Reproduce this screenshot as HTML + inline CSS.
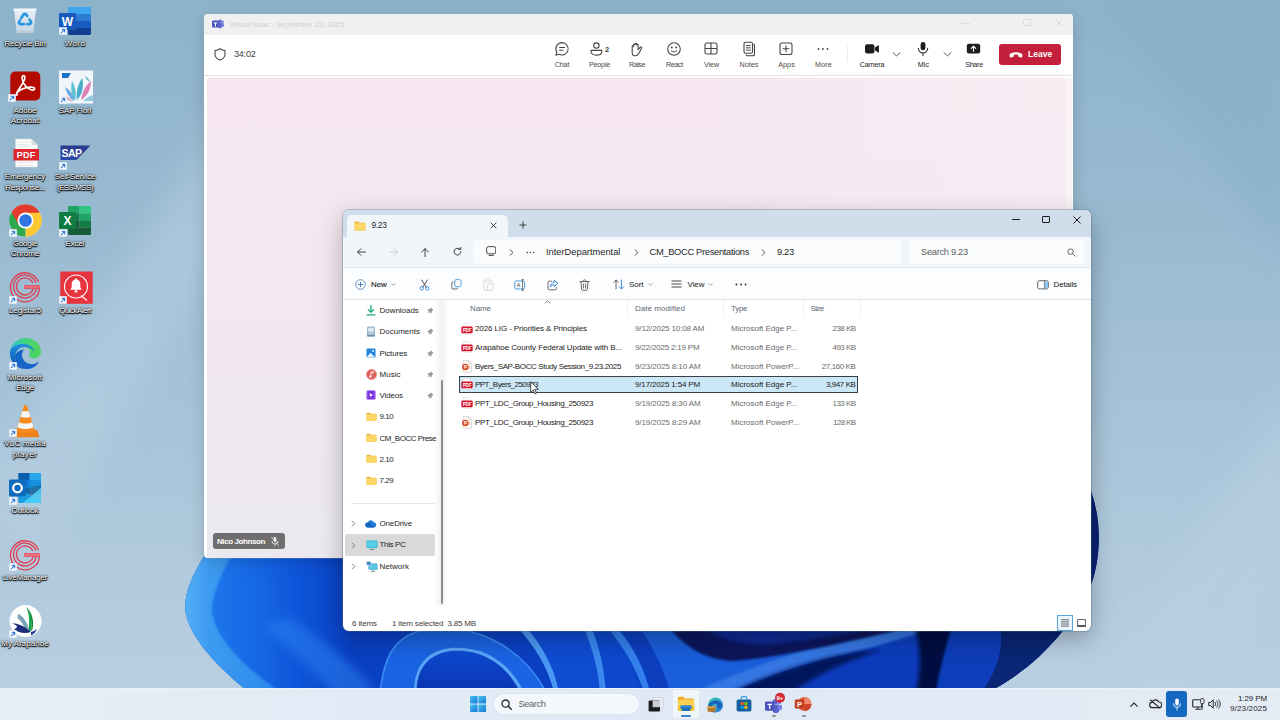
<!DOCTYPE html>
<html><head><meta charset="utf-8"><title>Desktop</title>
<style>
*{box-sizing:border-box;margin:0;padding:0}
html,body{width:1280px;height:720px;overflow:hidden}
body{font-family:"Liberation Sans",sans-serif;position:relative;background:#9dbcd3;color:#222}
.abs{position:absolute}
#wall{position:absolute;left:0;top:0;width:1280px;height:720px;background:linear-gradient(180deg,#8db3cb 0%,#98bad1 30%,#a8c4d9 60%,#b6cde0 90%,#bad0e2 100%)}
#wallsvg{position:absolute;left:0;top:0}
/* desktop icons */
.dlabel{position:absolute;width:70px;text-align:center;color:#fff;font-size:8px;line-height:10px;text-shadow:0 1px 1.5px #000,0 0 2px #000,0 0 1px #000;letter-spacing:-0.1px}
.ico{position:absolute}
.sc{position:absolute;width:7px;height:7px;background:#fff;border-radius:1px}
.sc:after{content:"";position:absolute;left:1.5px;top:1.5px;width:4px;height:4px;border-top:1.5px solid #2a7bd3;border-right:1.5px solid #2a7bd3}
.dl{position:absolute;width:80px;text-align:center;color:#fff;font-size:8px;line-height:10px;white-space:nowrap;text-shadow:0 .7px 1.100px #000,0 0 1.800px rgba(0,0,0,.9),.5px .9px 1px rgba(0,0,0,.9),0 0 3px rgba(0,0,0,.45)}
/* Teams */
#teams{position:absolute;left:204px;top:14px;width:869px;height:544px;background:#fff;border-radius:4px;overflow:hidden;box-shadow:0 0 0 .5px rgba(150,165,180,.5),0 4px 16px rgba(0,0,0,.16)}
#teams .tbar{position:absolute;left:0;top:0;width:100%;height:21px;background:#f0f0f0}
#teams .tool{position:absolute;left:0;top:21px;width:100%;height:41px;background:#fff;border-bottom:1px solid #e3e0e3}
#teams .stage{position:absolute;left:3px;top:64px;width:865px;height:480px;background:linear-gradient(90deg,rgba(255,255,255,0) 0%,rgba(255,255,255,0) 55%,rgba(255,255,255,.22) 100%),linear-gradient(180deg,#f6e7f0 0%,#f4e7f0 45%,#eee8ef 75%,#ebe9ef 100%)}
.tl{position:absolute;top:24.5px;font-size:7.2px;line-height:9px;color:#4a4a4a;transform:translateX(-50%);white-space:nowrap}
.tl.dk{color:#262626}
.tbtn{position:absolute;top:63px;font-size:8px;color:#424242;transform:translateX(-50%);white-space:nowrap;line-height:9px;top:59px}
/* Explorer */
#exp{position:absolute;left:343px;top:210px;width:748px;height:421px;background:#fff;border-radius:6px;overflow:hidden;box-shadow:0 0 0 1px rgba(90,110,130,.35),0 8px 24px rgba(0,0,0,.28)}
#exp .tabs{position:absolute;left:0;top:0;width:100%;height:27px;background:#cfdeea}
#exp .tab{position:absolute;left:4px;top:5px;width:161px;height:22px;background:#f1f6fa;border-radius:5px 5px 0 0}
#exp .addr{position:absolute;left:0;top:27px;width:100%;height:31px;background:#f1f6fa;border-bottom:1px solid #e3e7eb}
#exp .cmd{position:absolute;left:0;top:58px;width:100%;height:32px;background:#fcfdfe;border-bottom:1px solid #dcdfe3}
.t{position:absolute;white-space:nowrap;font-size:9px;line-height:11px;color:#1f1f1f}
.t.f{font-size:8px;line-height:11px}
.t.a{font-size:9.300px;line-height:12px;color:#1f1f1f}
/* taskbar */
#task{position:absolute;left:0;top:688px;width:1280px;height:32px;background:linear-gradient(90deg,#e6eef6,#dfe9f5 50%,#e4ecf5);box-shadow:inset 0 1px 0 #edf2f8}
</style></head><body>
<div id="wall"></div>
<svg id="wallsvg" width="1280" height="720" viewBox="0 0 1280 720">
<defs>
<linearGradient id="gL" gradientUnits="userSpaceOnUse" x1="212" y1="0" x2="350" y2="0"><stop offset="0" stop-color="#1d76ea"/><stop offset=".3" stop-color="#1668e6"/><stop offset=".65" stop-color="#0e54d8"/><stop offset="1" stop-color="#0a40c2"/></linearGradient>
<linearGradient id="gL2" gradientUnits="userSpaceOnUse" x1="183" y1="0" x2="290" y2="0"><stop offset="0" stop-color="#55aff4"/><stop offset=".25" stop-color="#3c9bf0"/><stop offset="1" stop-color="#2a86ec"/></linearGradient>
<linearGradient id="gM" gradientUnits="userSpaceOnUse" x1="343" y1="0" x2="1100" y2="0"><stop offset="0" stop-color="#0b42c6"/><stop offset=".2" stop-color="#0d4cd2"/><stop offset=".45" stop-color="#0b40c4"/><stop offset=".7" stop-color="#0a36b0"/><stop offset="1" stop-color="#08288c"/></linearGradient>
<linearGradient id="gArch" x1="0" y1="0" x2="0" y2="1"><stop offset="0" stop-color="#0d4ad0"/><stop offset="1" stop-color="#0a34b0"/></linearGradient>
<filter id="b1"><feGaussianBlur stdDeviation="1"/></filter>
<filter id="b2"><feGaussianBlur stdDeviation="2.2"/></filter>
<filter id="b3"><feGaussianBlur stdDeviation="5"/></filter>
<filter id="b8"><feGaussianBlur stdDeviation="16"/></filter>
<clipPath id="bloomclip"><path d="M214 540 C198 565 186 585 185 607 C186 632 212 662 246 690 L992 690 C1034 668 1068 632 1090 588 C1100 562 1103 525 1091 491 L1076 470 L1076 400 L214 400 Z"/></clipPath>
</defs>
<g filter="url(#b8)" opacity=".55">
<path d="M-40 520 L260 60 L340 60 L40 560 Z" fill="#b7cfe2"/>
<path d="M1080 720 L1300 380 L1300 560 L1200 720 Z" fill="#b9d0e3"/>
<path d="M1100 0 L1290 0 L1290 260 Z" fill="#86aec9"/>
</g>
<g clip-path="url(#bloomclip)">
<rect x="180" y="400" width="930" height="300" fill="url(#gM)"/>
<rect x="180" y="540" width="172" height="150" fill="url(#gL2)"/>
<path d="M240 540 C226 566 213 588 212 610 C214 636 240 664 282 694 L420 694 L420 540 Z" fill="url(#gL)"/>
<path d="M240 540 C226 566 213 588 212 610 C214 636 240 664 282 694" fill="none" stroke="#2a86ee" stroke-width="2.500" opacity=".6" filter="url(#b1)"/>
<path d="M262 626 C290 648 314 670 334 694 L378 694 C352 662 320 638 290 618 Z" fill="#2f84f2" opacity=".5" filter="url(#b3)"/>
<!-- arches under explorer -->
<path d="M400 628 L560 628 L560 692 L400 692 Z" fill="#0b3fc2"/>
<path d="M380 692 C384 660 392 640 416 632 C470 618 522 646 546 692 Z" fill="#1a63e2"/>
<path d="M380 692 C384 660 392 640 416 632 C470 618 522 646 546 692" fill="none" stroke="#3b8cf2" stroke-width="1.600"/>
<path d="M414 692 C414 667 426 651 450 648 C486 645 510 664 524 692 Z" fill="#5aa5f6"/>
<path d="M416.500 692 C416.500 669 428 654 451 651 C484 648.500 507 666 520 692 Z" fill="url(#gArch)"/>
<!-- ridges -->
<path d="M518 628 C536 648 548 668 554 692 L559 692 C554 664 541 644 527 628 Z" fill="#4a98f4"/>
<path d="M527 628 C542 646 554 666 559 692 L600 692 C596 664 590 644 584 628 Z" fill="#0e4cd2"/>
<path d="M584 628 C592 648 598 668 600 692 L606 692 C604 664 598 644 592 628 Z" fill="#3a88f0"/>
<path d="M592 628 C600 648 606 668 607 692 L640 692 C632 664 622 644 612 628 Z" fill="#0d48cc"/>
<path d="M608 628 C624 648 636 668 644 692 L650 692 C643 664 631 644 617 628 Z" fill="#3380ec"/>
<!-- right sweeping petals -->
<path d="M619 628 L1100 628 L1100 692 L652 692 C645 664 633 644 619 628 Z" fill="#0c3ebe"/>
<path d="M640 628 L905 628 C870 640 830 650 790 662 C750 674 715 686 700 692 L670 692 C664 670 654 648 640 628 Z" fill="#1a5eda"/>
<path d="M690 694 C720 680 760 664 800 652 C840 641 875 634 905 628 L935 628 C900 640 860 650 820 662 C780 674 745 688 730 694 Z" fill="#3476e2" filter="url(#b1)"/>
<path d="M668 626 C684 646 704 660 734 661 C790 656 850 641 899 630 L899 626 Z" fill="#07185c" filter="url(#b1)"/>
<path d="M700 626 C720 640 745 646 775 644 C810 640 850 633 880 626 Z" fill="#0b2c94" filter="url(#b2)"/>
<path d="M728 694 C760 680 790 668 822 660 C850 653 875 650 900 650 L925 654 L930 694 Z" fill="#0c3cbc"/>
<path d="M728 694 C752 682 782 670 815 661 C840 654 862 651 882 650 C850 660 820 672 790 694 Z" fill="#06195c" filter="url(#b2)"/>
<path d="M915 628 L953 628 C946 650 941 672 938 692 L916 692 C921 670 921 648 915 628 Z" fill="#040f40" filter="url(#b2)"/>
<path d="M952 628 L1000 628 C1004 650 996 672 982 692 L936 692 C940 670 946 648 952 628 Z" fill="#0c3cb8" filter="url(#b1)"/>
<path d="M1000 628 L1100 628 L1100 692 L982 692 C996 672 1004 650 1000 628 Z" fill="#0a2674"/>
<path d="M1060 400 L1110 400 L1110 640 L1040 640 Z" fill="#08206f"/>
</g>
</svg>

<div id="desk">
<svg class="abs" style="left:12px;top:6px" width="26" height="28" viewBox="0 0 26 28"><defs><linearGradient id="rb" x1="0" y1="0" x2="0" y2="1"><stop offset="0" stop-color="#eef4f9"/><stop offset="1" stop-color="#c9d9e6"/></linearGradient></defs><path d="M2 3.500h22l-2.600 22.300c-.1.800-.7 1.200-1.400 1.200H6c-.7 0-1.300-.4-1.400-1.200z" fill="url(#rb)" opacity=".93"/><path d="M1.500 2.500h23v2h-23z" fill="#f7fafc"/><path d="M4.200 24.500h17.600l-.3 1.600c-.1.600-.6.900-1.200.9H5.700c-.6 0-1.100-.3-1.200-.9z" fill="#b9c9d6" opacity=".8"/><g fill="none" stroke="#2496e0" stroke-width="2.700" stroke-linecap="round"><path d="M9.200 12.200l2.300-3.600c.7-1 2.100-1 2.800 0l.9 1.400"/><path d="M17.600 13.600l1.300 2.200c.6 1.100-.1 2.400-1.400 2.400h-2.300"/><path d="M11.800 18.200H8.600c-1.300 0-2-1.300-1.400-2.400l.6-1.100"/></g></svg>
<div class="dl" style="left:-15px;top:39.0px"><span style="letter-spacing:-0.091px">Recycle Bin</span></div>
<svg class="abs" style="left:59px;top:6px" width="33" height="30" viewBox="0 0 33 30"><rect x="9" y="1" width="23" height="7.500" rx="1.200" fill="#41a5ee"/><rect x="9" y="8" width="23" height="7" fill="#2b7cd3"/><rect x="9" y="15" width="23" height="7" fill="#185abd"/><path d="M9 22h23v5.500c0 .8-.6 1.400-1.400 1.400H10.400c-.8 0-1.400-.6-1.400-1.400z" fill="#103f91"/><rect x="0" y="7" width="17" height="17" rx="1.400" fill="#185abd"/><text x="8.500" y="20" text-anchor="middle" font-size="12" font-weight="700" fill="#fff" font-family="Liberation Sans, sans-serif">W</text></svg>
<svg class="abs" style="left:59px;top:27px" width="8" height="8" viewBox="0 0 8 8"><rect x=".2" y=".2" width="7.600" height="7.600" rx=".8" fill="#fbfdff" stroke="#c9d6e2" stroke-width=".4"/><path d="M2.200 5.800L5.600 2.400M3 2.300h2.700V5" fill="none" stroke="#2b7cd3" stroke-width="1.100" stroke-linecap="round" stroke-linejoin="round"/></svg>
<div class="dl" style="left:35px;top:39.0px"><span style="letter-spacing:0.408px">Word</span></div>
<svg class="abs" style="left:10px;top:71px" width="31" height="30" viewBox="0 0 31 30"><rect x=".3" y=".5" width="30" height="29" rx="5" fill="#b30b00"/><path d="M6.500 22.500c1.500-4 6-8.500 8-14 .7-2 .2-4-1-4s-1.800 2-1 4.500c1.200 4 4.500 8.200 8.500 9.700 2 .7 3.600.2 3.600-.9s-1.600-1.800-4.200-1.600c-4.500.4-10.200 2.500-12.700 4.800-1.300 1.300-1.700 2.500-1.200 3s1-.3 0-1.500z" fill="none" stroke="#fff" stroke-width="1.700" stroke-linejoin="round"/></svg>
<svg class="abs" style="left:8px;top:93.5px" width="8" height="8" viewBox="0 0 8 8"><rect x=".2" y=".2" width="7.600" height="7.600" rx=".8" fill="#fbfdff" stroke="#c9d6e2" stroke-width=".4"/><path d="M2.200 5.800L5.600 2.400M3 2.300h2.700V5" fill="none" stroke="#2b7cd3" stroke-width="1.100" stroke-linecap="round" stroke-linejoin="round"/></svg>
<div class="dl" style="left:-15px;top:105.7px"><span style="letter-spacing:-0.028px">Adobe</span></div>
<div class="dl" style="left:-15px;top:116.0px"><span style="letter-spacing:0.132px">Acrobat</span></div>
<svg class="abs" style="left:59px;top:70px" width="34" height="34" viewBox="0 0 34 34"><rect x="0" y=".5" width="34" height="33" fill="#f1f6fa"/><path d="M3 3h9L9 8H3z" fill="#1a74c8"/><path d="M18 30c-1-6 0-14 5-22 2 6 1 16-5 22z" fill="#2b9fc0" opacity=".85"/><path d="M22 30c1-7 4-14 10-19 0 7-3 15-10 19z" fill="#d55aa0" opacity=".75"/><path d="M16 31c-3-5-5-12-3-20 3 5 5 13 3 20z" fill="#3bb3c8" opacity=".8"/><path d="M15 31C11 28 7 23 6 17c5 3 9 8 9 14z" fill="#3f8fd8" opacity=".75"/><path d="M24 31c3-3 6-5 10-6v6z" fill="#6fb8d8" opacity=".7"/><path d="M14 32C10 31 6 29 3 26c5 0 9 2 11 6z" fill="#c87aa8" opacity=".6"/><path d="M26 6c2 1 4 3 5 6-2-1-4-3-5-6z" fill="#2b9fc0" opacity=".8"/></svg>
<svg class="abs" style="left:59px;top:96px" width="8" height="8" viewBox="0 0 8 8"><rect x=".2" y=".2" width="7.600" height="7.600" rx=".8" fill="#fbfdff" stroke="#c9d6e2" stroke-width=".4"/><path d="M2.200 5.800L5.600 2.400M3 2.300h2.700V5" fill="none" stroke="#2b7cd3" stroke-width="1.100" stroke-linecap="round" stroke-linejoin="round"/></svg>
<div class="dl" style="left:35px;top:105.7px"><span style="letter-spacing:-0.116px">SAP Fiori</span></div>
<svg class="abs" style="left:13px;top:138px" width="27" height="30" viewBox="0 0 27 30"><path d="M2.500 1h16l6 6v22h-22z" fill="#fbfbfb" stroke="#d8d8d8" stroke-width=".5"/><path d="M18.500 1v6h6z" fill="#dcdcdc"/><path d="M4.500 4h11M4.500 6.500h11M4.500 9h13M4.500 24.500h16M4.500 27h16" stroke="#e9e9e9" stroke-width="1.200"/><rect x=".5" y="11" width="25.500" height="11.500" fill="#e0262d"/><text x="13.200" y="20" text-anchor="middle" font-size="9" font-weight="700" fill="#fff" font-family="Liberation Sans, sans-serif" letter-spacing=".3">PDF</text></svg>
<div class="dl" style="left:-15px;top:172.4px"><span style="letter-spacing:-0.019px">Emergency</span></div>
<div class="dl" style="left:-15px;top:182.8px"><span style="letter-spacing:-0.300px">Response...</span></div>
<svg class="abs" style="left:60px;top:145px" width="31" height="16" viewBox="0 0 31 16"><defs><linearGradient id="sapg" x1="0" y1="0" x2="0" y2="1"><stop offset="0" stop-color="#2b3a8c"/><stop offset="1" stop-color="#2a4aa8"/></linearGradient></defs><path d="M.5.600h30L16.500 15H.5z" fill="url(#sapg)"/><text x="1.600" y="12" font-size="10.500" font-weight="700" fill="#fff" font-family="Liberation Sans, sans-serif" letter-spacing="-.6">SAP</text></svg>
<svg class="abs" style="left:59px;top:162px" width="8" height="8" viewBox="0 0 8 8"><rect x=".2" y=".2" width="7.600" height="7.600" rx=".8" fill="#fbfdff" stroke="#c9d6e2" stroke-width=".4"/><path d="M2.200 5.800L5.600 2.400M3 2.300h2.700V5" fill="none" stroke="#2b7cd3" stroke-width="1.100" stroke-linecap="round" stroke-linejoin="round"/></svg>
<div class="dl" style="left:35px;top:172.4px"><span style="letter-spacing:-0.227px">Self-Service</span></div>
<div class="dl" style="left:35px;top:182.8px"><span style="letter-spacing:-0.594px">(ESS-MSS)</span></div>
<svg class="abs" style="left:9px;top:204px" width="33" height="33" viewBox="0 0 33 33"><circle cx="16.500" cy="16.500" r="16" fill="#fff"/><path d="M16.500 16.500L2.640 8.500A16 16 0 0 1 30.360 8.500z" fill="#e33b2e"/><path d="M16.500 16.500L30.360 8.500A16 16 0 0 1 16.500 32.500z" fill="#fcc934"/><path d="M16.500 16.500L16.500 32.500A16 16 0 0 1 2.640 8.500z" fill="#2da94f"/><path d="M16.500 8.500h13.860A16 16 0 0 1 16.500 32.500l6.900-12z" fill="#fcc934"/><path d="M2.640 8.500l6.930 12 6.930 12A16 16 0 0 1 2.640 8.500z" fill="#2da94f"/><path d="M16.500 8.500H30.360A16 16 0 0 0 2.640 8.500l6.930 12z" fill="#e33b2e"/><circle cx="16.500" cy="16.500" r="8" fill="#fff"/><circle cx="16.500" cy="16.500" r="6.300" fill="#2f74e0"/></svg>
<svg class="abs" style="left:9px;top:229px" width="8" height="8" viewBox="0 0 8 8"><rect x=".2" y=".2" width="7.600" height="7.600" rx=".8" fill="#fbfdff" stroke="#c9d6e2" stroke-width=".4"/><path d="M2.200 5.800L5.600 2.400M3 2.300h2.700V5" fill="none" stroke="#2b7cd3" stroke-width="1.100" stroke-linecap="round" stroke-linejoin="round"/></svg>
<div class="dl" style="left:-15px;top:239.1px"><span style="letter-spacing:-0.299px">Google</span></div>
<div class="dl" style="left:-15px;top:249.4px"><span style="letter-spacing:0.041px">Chrome</span></div>
<svg class="abs" style="left:59px;top:205px" width="33" height="31" viewBox="0 0 33 31"><rect x="9" y="1" width="11.500" height="7.500" fill="#21a366"/><path d="M20.500 1h10c.8 0 1.500.7 1.500 1.500v6H20.500z" fill="#33c481"/><rect x="9" y="8.500" width="11.500" height="7" fill="#107c41"/><rect x="20.500" y="8.500" width="11.500" height="7" fill="#21a366"/><rect x="9" y="15.500" width="11.500" height="7" fill="#185c37"/><rect x="20.500" y="15.500" width="11.500" height="7" fill="#107c41"/><path d="M9 22.500h23v6c0 .8-.7 1.500-1.500 1.500h-20c-.8 0-1.500-.7-1.500-1.500z" fill="#185c37"/><rect x="0" y="7" width="17" height="17" rx="1.400" fill="#107c41"/><text x="8.500" y="20" text-anchor="middle" font-size="12" font-weight="700" fill="#fff" font-family="Liberation Sans, sans-serif">X</text></svg>
<svg class="abs" style="left:59px;top:229px" width="8" height="8" viewBox="0 0 8 8"><rect x=".2" y=".2" width="7.600" height="7.600" rx=".8" fill="#fbfdff" stroke="#c9d6e2" stroke-width=".4"/><path d="M2.200 5.800L5.600 2.400M3 2.300h2.700V5" fill="none" stroke="#2b7cd3" stroke-width="1.100" stroke-linecap="round" stroke-linejoin="round"/></svg>
<div class="dl" style="left:35px;top:239.1px"><span style="letter-spacing:-0.152px">Excel</span></div>
<svg class="abs" style="left:9px;top:271px" width="32" height="32" viewBox="0 0 32 32"><g fill="none" stroke="#e23b4e" stroke-width="1.300"><path d="M29.500 11A14.500 14.500 0 1 0 30.500 16"/><path d="M26.800 11.500A11.500 11.500 0 1 0 27.500 16"/><path d="M23.800 12A8.500 8.500 0 1 0 24.500 16"/></g><path d="M15 14.200h16v3.600H15z" fill="#e23b4e"/><path d="M15 15.300h16M15 16.700h16" stroke="#f6b5bd" stroke-width=".5"/></svg>
<svg class="abs" style="left:9px;top:296px" width="8" height="8" viewBox="0 0 8 8"><rect x=".2" y=".2" width="7.600" height="7.600" rx=".8" fill="#fbfdff" stroke="#c9d6e2" stroke-width=".4"/><path d="M2.200 5.800L5.600 2.400M3 2.300h2.700V5" fill="none" stroke="#2b7cd3" stroke-width="1.100" stroke-linecap="round" stroke-linejoin="round"/></svg>
<div class="dl" style="left:-15px;top:305.8px"><span style="letter-spacing:-0.102px">Legistar5</span></div>
<svg class="abs" style="left:59.500px;top:271px" width="33" height="33" viewBox="0 0 33 33"><rect x=".3" y=".5" width="32.400" height="32.300" fill="#e8343f"/><circle cx="16" cy="15.500" r="11.500" fill="none" stroke="#fff" stroke-width="1.100"/><path d="M21 24.500l6 5" stroke="#fff" stroke-width="1.100"/><path d="M16 8.500c-3 0-4.300 2.300-4.300 5v3l-1.500 2.300h11.600l-1.500-2.300v-3c0-2.700-1.300-5-4.300-5z" fill="#fff"/><circle cx="16" cy="20.300" r="1.400" fill="#fff"/><circle cx="16" cy="8.200" r="1" fill="#fff"/></svg>
<svg class="abs" style="left:59px;top:296px" width="8" height="8" viewBox="0 0 8 8"><rect x=".2" y=".2" width="7.600" height="7.600" rx=".8" fill="#fbfdff" stroke="#c9d6e2" stroke-width=".4"/><path d="M2.200 5.800L5.600 2.400M3 2.300h2.700V5" fill="none" stroke="#2b7cd3" stroke-width="1.100" stroke-linecap="round" stroke-linejoin="round"/></svg>
<div class="dl" style="left:35px;top:305.8px"><span style="letter-spacing:-0.541px">QuickAlert</span></div>
<svg class="abs" style="left:9px;top:337px" width="33" height="33" viewBox="0 0 33 33"><defs><linearGradient id="ed1" x1="0" y1="0" x2="1" y2="0"><stop offset="0" stop-color="#2fc6d0"/><stop offset=".5" stop-color="#41d07c"/><stop offset="1" stop-color="#55d65a"/></linearGradient><linearGradient id="ed2" x1="0" y1="0" x2="0" y2="1"><stop offset="0" stop-color="#1f8fe0"/><stop offset="1" stop-color="#0c4da8"/></linearGradient></defs><path d="M1 16.500C1 8 8 1 16.500 1 26 1 32 8 32 14.500c0 4-3 7-7 7-3.500 0-5-1.500-5-3 0-1 1-1.500 1-3.200C21 12.500 18.500 10 15 10 9.500 10 6 15 6 20c0 .5 0 1 .1 1.500C3 21 1 19.500 1 16.500z" fill="url(#ed1)"/><path d="M1 16.500c0-1 .1-2 .3-3C3 9.500 8 7 14 7c6 0 11 3.500 11 8 0 0-2-5-9.500-5C9.500 10 6 15 6 20c0 6 4.500 11 10.500 12C8 32 1 25 1 16.500z" fill="url(#ed2)"/><path d="M6 20c0 6 4.500 11 10.500 12 6 .5 11-2.500 13.500-7.500-2.500 2-6 3-9 2.500-5-1-8-5-8-9 0-2 .8-4 2-5.500C10 13 6 16 6 20z" fill="#1565c8"/></svg>
<svg class="abs" style="left:9px;top:362px" width="8" height="8" viewBox="0 0 8 8"><rect x=".2" y=".2" width="7.600" height="7.600" rx=".8" fill="#fbfdff" stroke="#c9d6e2" stroke-width=".4"/><path d="M2.200 5.800L5.600 2.400M3 2.300h2.700V5" fill="none" stroke="#2b7cd3" stroke-width="1.100" stroke-linecap="round" stroke-linejoin="round"/></svg>
<div class="dl" style="left:-15px;top:372.5px"><span style="letter-spacing:0.250px">Microsoft</span></div>
<div class="dl" style="left:-15px;top:382.9px"><span style="letter-spacing:-0.297px">Edge</span></div>
<svg class="abs" style="left:11px;top:404px" width="29" height="34" viewBox="0 0 29 34"><path d="M3 26h23l2 5.500c.3.900-.3 1.800-1.300 1.800H2.300c-1 0-1.600-.9-1.300-1.800z" fill="#f08019"/><path d="M14.500 1c.9 0 1.500.5 1.800 1.400L23.500 26c-2 2.200-5.300 3.200-9 3.200S7.500 28.200 5.500 26L12.700 2.400C13 1.500 13.600 1 14.500 1z" fill="#f58a1f"/><path d="M11.300 7.200h6.400l1.700 5.600c-1.400.6-3.100.9-4.900.9s-3.500-.3-4.900-.9z" fill="#f6f6f6"/><path d="M7.900 18.200c1.900.9 4.200 1.300 6.600 1.300s4.700-.4 6.600-1.300l1.500 5.100c-2.200 1.200-5 1.800-8.100 1.800s-5.900-.6-8.100-1.800z" fill="#f6f6f6"/></svg>
<svg class="abs" style="left:9px;top:429px" width="8" height="8" viewBox="0 0 8 8"><rect x=".2" y=".2" width="7.600" height="7.600" rx=".8" fill="#fbfdff" stroke="#c9d6e2" stroke-width=".4"/><path d="M2.200 5.800L5.600 2.400M3 2.300h2.700V5" fill="none" stroke="#2b7cd3" stroke-width="1.100" stroke-linecap="round" stroke-linejoin="round"/></svg>
<div class="dl" style="left:-15px;top:439.2px"><span style="letter-spacing:0.225px">VLC media</span></div>
<div class="dl" style="left:-15px;top:449.6px"><span style="letter-spacing:0.367px">player</span></div>
<svg class="abs" style="left:9px;top:472px" width="33" height="33" viewBox="0 0 33 33"><rect x="9.500" y="1" width="22.500" height="21" rx="1.500" fill="#1490df"/><rect x="9.500" y="1" width="11" height="7" fill="#0a5eb0"/><rect x="20.500" y="1" width="11.500" height="7" rx="1" fill="#28a8ea"/><rect x="9.500" y="8" width="11" height="7" fill="#0f78d4"/><rect x="20.500" y="8" width="11.500" height="7" fill="#1490df"/><rect x="20.500" y="15" width="11.500" height="7" fill="#35b8f1"/><path d="M9.500 17l22.500-3.500v16c0 .8-.7 1.500-1.500 1.500H11c-.8 0-1.500-.7-1.500-1.500z" fill="#123b6d" opacity=".55"/><path d="M9.500 16l22.500 13.500c-.2.900-.8 1.500-1.700 1.500H11c-.8 0-1.500-.7-1.500-1.500z" fill="#1b9de2"/><path d="M32 16L14 31h16.500c.8 0 1.500-.7 1.500-1.500z" fill="#50d9ff" opacity=".8"/><rect x="0" y="7.500" width="17" height="17" rx="1.400" fill="#0f6cbd"/><circle cx="8.500" cy="16" r="4.300" fill="none" stroke="#fff" stroke-width="2.200"/></svg>
<svg class="abs" style="left:9px;top:497px" width="8" height="8" viewBox="0 0 8 8"><rect x=".2" y=".2" width="7.600" height="7.600" rx=".8" fill="#fbfdff" stroke="#c9d6e2" stroke-width=".4"/><path d="M2.200 5.800L5.600 2.400M3 2.300h2.700V5" fill="none" stroke="#2b7cd3" stroke-width="1.100" stroke-linecap="round" stroke-linejoin="round"/></svg>
<div class="dl" style="left:-15px;top:505.9px"><span style="letter-spacing:-0.083px">Outlook</span></div>
<svg class="abs" style="left:9px;top:539px" width="32" height="32" viewBox="0 0 32 32"><g fill="none" stroke="#e23b4e" stroke-width="1.300"><path d="M29.500 11A14.500 14.500 0 1 0 30.500 16"/><path d="M26.800 11.500A11.500 11.500 0 1 0 27.500 16"/><path d="M23.800 12A8.500 8.500 0 1 0 24.500 16"/></g><path d="M15 14.200h16v3.600H15z" fill="#e23b4e"/><path d="M15 15.300h16M15 16.700h16" stroke="#f6b5bd" stroke-width=".5"/></svg>
<svg class="abs" style="left:9px;top:563px" width="8" height="8" viewBox="0 0 8 8"><rect x=".2" y=".2" width="7.600" height="7.600" rx=".8" fill="#fbfdff" stroke="#c9d6e2" stroke-width=".4"/><path d="M2.200 5.800L5.600 2.400M3 2.300h2.700V5" fill="none" stroke="#2b7cd3" stroke-width="1.100" stroke-linecap="round" stroke-linejoin="round"/></svg>
<div class="dl" style="left:-15px;top:572.6px"><span style="letter-spacing:-0.141px">LiveManager</span></div>
<svg class="abs" style="left:9px;top:604px" width="33" height="34" viewBox="0 0 33 34"><circle cx="16.500" cy="17" r="16" fill="#fdfefe"/><path d="M17.500 3c4 6 6 14 4.500 24l-2.500-.5C21 17.500 20 10 17.500 3z" fill="#11a24b"/><path d="M17.500 3c5 5 8 13 6 22l-1.500 2C23.500 18 21.500 9 17.500 3z" fill="#0c8a3c"/><path d="M9.500 10c5 3 9 9 11 17.500l-4-1C15 20 13 14.500 9.500 10z" fill="#8fb4c4"/><path d="M9.500 10c-1 1.500-1 3-.5 4.500 3.500 3 6 7 7.500 12l4 1C18.500 19 14.500 13 9.500 10z" fill="#7aa3b6"/><path d="M3 19.500c5-.5 12 2 19 8.500-6 2-12 1-17-2.500 2-1 3-2 3-3.500-1.500-1.200-3-2-5-2.500z" fill="#1c2f7a"/><path d="M22 28c2-.5 4-1.500 6-3-1 3-3 5-6 6.200z" fill="#233a8e"/></svg>
<svg class="abs" style="left:9px;top:630px" width="8" height="8" viewBox="0 0 8 8"><rect x=".2" y=".2" width="7.600" height="7.600" rx=".8" fill="#fbfdff" stroke="#c9d6e2" stroke-width=".4"/><path d="M2.200 5.800L5.600 2.400M3 2.300h2.700V5" fill="none" stroke="#2b7cd3" stroke-width="1.100" stroke-linecap="round" stroke-linejoin="round"/></svg>
<div class="dl" style="left:-15px;top:639.3px"><span style="letter-spacing:0.033px">My Arapahoe</span></div>
</div>

<div id="teams">
  <div class="tbar">
    <svg class="abs" style="left:8px;top:5px" width="12" height="10" viewBox="0 0 12 10"><rect x="0" y="1.6" width="7" height="7" rx="1" fill="#4b53bc"/><circle cx="8.2" cy="2.2" r="1.7" fill="#5b63c9"/><circle cx="10.8" cy="2.8" r="1.1" fill="#6a72d6"/><path d="M6 4h4.2v3.4a2.2 2.2 0 0 1-4.2.6z" fill="#5b63c9"/><path d="M9.6 4.3H12v2.5a1.4 1.4 0 0 1-2.4.8z" fill="#7b83eb"/><path d="M1.8 3.6h3.4v.9H4v3H3v-3H1.8z" fill="#fff"/></svg>
    <div class="t" style="left:25px;top:5px;font-size:8px;color:#d0d0d0;letter-spacing:-0.250px">Virtual Isaac - September 23, 2025</div>
    <div class="abs" style="left:757px;top:9px;width:9px;height:1px;background:#dcdcdc"></div>
    <div class="abs" style="left:819px;top:5px;width:8px;height:7px;border:1px solid #dcdcdc;border-radius:1px"></div>
    <svg class="abs" style="left:851px;top:5px" width="8" height="8" viewBox="0 0 8 8"><path d="M.5.5l7 7M7.500 .5l-7 7" stroke="#dadada" stroke-width="1" fill="none"/></svg>
  </div>
  <div class="tool">
    <svg class="abs" style="left:10px;top:13px" width="12" height="13" viewBox="0 0 12 13"><path d="M6 .8c1.600 1.200 3.300 1.700 5 1.800v3.600c0 2.800-2 4.800-5 5.900-3-1.100-5-3.100-5-5.900V2.600C2.700 2.500 4.400 2 6 .8z" fill="none" stroke="#4a4a4a" stroke-width="1.100"/></svg>
    <div class="t" style="left:30px;top:14px;font-size:9px;color:#3d3d3d;letter-spacing:-0.206px">34:02</div>
    <!-- Chat -->
    <svg class="abs" style="left:350px;top:6px" width="16" height="16" viewBox="0 0 16 16"><path d="M8 1.600a6.200 6.200 0 1 1-2.900 11.700L1.800 14.300l1-3.200A6.200 6.200 0 0 1 8 1.600z" fill="none" stroke="#454545" stroke-width="1.100" stroke-linejoin="round"/><path d="M5.600 6.500h5M5.600 9.200h3.400" stroke="#454545" stroke-width="1" stroke-linecap="round"/></svg>
    <div class="tl" style="left:358px;letter-spacing:-0.109px">Chat</div>
    <!-- People -->
    <svg class="abs" style="left:385px;top:6px" width="22" height="16" viewBox="0 0 22 16"><circle cx="7.400" cy="4.600" r="2.700" fill="none" stroke="#454545" stroke-width="1.100"/><path d="M2 9.400h10.800v1c0 2.300-2.300 3.700-5.400 3.700S2 12.700 2 10.400z" fill="none" stroke="#454545" stroke-width="1.100" stroke-linejoin="round"/><text x="16" y="10.800" font-size="7.500" font-weight="700" fill="#3a3a3a" font-family="Liberation Sans, sans-serif">2</text></svg>
    <div class="tl" style="left:395.500px;letter-spacing:-0.190px">People</div>
    <!-- Raise -->
    <svg class="abs" style="left:425px;top:6px" width="16" height="16" viewBox="0 0 16 16"><path d="M3.200 9.500V5.600c0-1 1.400-1 1.400 0V3.800c0-1 1.500-1 1.500 0V3.100c0-1 1.500-1 1.500 0v.9c0-1 1.500-1 1.500 0v4.600l2.200-2.400c.8-.8 1.900.1 1.300 1.100l-2.700 5c-.9 1.600-2 2.500-3.700 2.500-1.900 0-3-1.500-3-3.400z" fill="none" stroke="#454545" stroke-width="1.100" stroke-linejoin="round"/></svg>
    <div class="tl" style="left:433px;letter-spacing:-0.478px">Raise</div>
    <!-- React -->
    <svg class="abs" style="left:462px;top:6px" width="16" height="16" viewBox="0 0 16 16"><circle cx="8" cy="8" r="6.300" fill="none" stroke="#454545" stroke-width="1.100"/><circle cx="5.800" cy="6.500" r=".9" fill="#454545"/><circle cx="10.200" cy="6.500" r=".9" fill="#454545"/><path d="M5.200 9.700c1.500 1.700 4.100 1.700 5.600 0" fill="none" stroke="#454545" stroke-width="1" stroke-linecap="round"/></svg>
    <div class="tl" style="left:470.500px;letter-spacing:-0.356px">React</div>
    <!-- View -->
    <svg class="abs" style="left:500px;top:7px" width="14" height="14" viewBox="0 0 14 14"><rect x="1" y="1" width="12" height="11" rx="1.800" fill="none" stroke="#454545" stroke-width="1.100"/><path d="M7 1v11M1 6.500h12" stroke="#454545" stroke-width="1.100"/></svg>
    <div class="tl" style="left:507.500px;letter-spacing:-0.113px">View</div>
    <!-- Notes -->
    <svg class="abs" style="left:538px;top:6px" width="15" height="16" viewBox="0 0 15 16"><rect x="2" y="1.300" width="8.500" height="11" rx="1.600" fill="none" stroke="#454545" stroke-width="1.100"/><path d="M4 13.800c.3.600.8.900 1.500.9h5c1.300 0 2-.8 2-2V4.500c0-.7-.3-1.200-.9-1.500" fill="none" stroke="#454545" stroke-width="1.100"/><path d="M4.300 4.500h4M4.300 6.800h4M4.300 9.100h4" stroke="#454545" stroke-width="1" stroke-linecap="round"/></svg>
    <div class="tl" style="left:545px;letter-spacing:0.044px">Notes</div>
    <!-- Apps -->
    <svg class="abs" style="left:575px;top:7px" width="14" height="14" viewBox="0 0 14 14"><rect x="1" y="1" width="12" height="11.500" rx="2" fill="none" stroke="#454545" stroke-width="1.100"/><path d="M7 3.800v6M4 6.800h6" stroke="#454545" stroke-width="1.100" stroke-linecap="round"/></svg>
    <div class="tl" style="left:582.500px;letter-spacing:0.090px">Apps</div>
    <!-- More -->
    <svg class="abs" style="left:613px;top:12px" width="12" height="4" viewBox="0 0 12 4"><circle cx="1.500" cy="2" r=".9" fill="#454545"/><circle cx="6" cy="2" r=".9" fill="#454545"/><circle cx="10.500" cy="2" r=".9" fill="#454545"/></svg>
    <div class="tl" style="left:619.500px;letter-spacing:0.152px">More</div>
    <div class="abs" style="left:643px;top:11px;width:1px;height:16px;background:#ececec"></div>
    <!-- Camera -->
    <svg class="abs" style="left:660px;top:8px" width="16" height="12" viewBox="0 0 16 12"><rect x="1" y="1.200" width="9.500" height="9.300" rx="2.200" fill="#1f1f1f"/><path d="M11 4.600l3-2.200c.4-.3.900 0 .9.500v6c0 .5-.5.800-.9.500l-3-2.200z" fill="#1f1f1f"/></svg>
    <div class="tl dk" style="left:668px;letter-spacing:-0.196px">Camera</div>
    <svg class="abs" style="left:688px;top:17px" width="9" height="5" viewBox="0 0 9 5"><path d="M1 .8l3.500 3L8 .8" fill="none" stroke="#5a5a5a" stroke-width="1" stroke-linecap="round"/></svg>
    <!-- Mic -->
    <svg class="abs" style="left:712px;top:6px" width="14" height="16" viewBox="0 0 14 16"><rect x="4.600" y="1" width="4.800" height="8.300" rx="2.400" fill="#1f1f1f"/><path d="M2.300 7.200a4.700 4.700 0 0 0 9.400 0M7 12v2.600" fill="none" stroke="#333" stroke-width="1.100" stroke-linecap="round"/></svg>
    <div class="tl dk" style="left:719.500px;letter-spacing:0.104px">Mic</div>
    <svg class="abs" style="left:739px;top:17px" width="9" height="5" viewBox="0 0 9 5"><path d="M1 .8l3.500 3L8 .8" fill="none" stroke="#5a5a5a" stroke-width="1" stroke-linecap="round"/></svg>
    <!-- Share -->
    <svg class="abs" style="left:762px;top:8px" width="15" height="12" viewBox="0 0 15 12"><rect x=".8" y=".8" width="13.400" height="9.800" rx="2" fill="#1f1f1f"/><path d="M7.500 8.300V3.400M5.300 5.300l2.200-2.100 2.200 2.100" fill="none" stroke="#fff" stroke-width="1.100" stroke-linecap="round" stroke-linejoin="round"/></svg>
    <div class="tl dk" style="left:770px;letter-spacing:-0.287px">Share</div>
    <!-- Leave -->
    <div class="abs" style="left:795px;top:9px;width:62px;height:21px;background:#c4203c;border-radius:3px"></div>
    <svg class="abs" style="left:805px;top:16px" width="14" height="8" viewBox="0 0 14 8"><path d="M7 1.200c2.600 0 4.700.7 6 1.900.6.600.6 1.500.2 2.300l-.3.500c-.3.500-.8.700-1.400.5l-1.600-.6c-.5-.2-.8-.6-.8-1.100V3.900c-1.300-.4-2.900-.4-4.200 0v.8c0 .5-.3.900-.8 1.100l-1.600.6c-.6.200-1.100 0-1.400-.5l-.3-.5C.4 4.600.4 3.700 1 3.100 2.300 1.900 4.400 1.200 7 1.200z" fill="#fff"/></svg>
    <div class="t" style="left:824px;top:14px;font-size:8.500px;font-weight:700;color:#fff;letter-spacing:0.018px">Leave</div>
  </div>
  <div class="stage">
    <div class="abs" style="right:0;top:0;width:6px;height:100%;background:rgba(255,255,255,.3)"></div>
    <div class="abs" style="left:6px;top:455px;width:72px;height:16px;background:#716e70;border-radius:3px"></div>
    <div class="t" style="left:10px;top:457.500px;font-size:8px;font-weight:700;color:#fff;letter-spacing:-0.416px">Nico Johnson</div>
    <svg class="abs" style="left:63px;top:458px" width="10" height="11" viewBox="0 0 10 11"><rect x="3.600" y="1" width="2.800" height="5" rx="1.400" fill="#e8e8e8"/><path d="M2 5a3 3 0 0 0 6 0M5 8v1.600" fill="none" stroke="#e8e8e8" stroke-width=".9"/><path d="M1.500 1l7 8.500" stroke="#e8e8e8" stroke-width=".9"/></svg>
  </div>
</div>

<div id="exp">
  <div class="tabs"><div class="tab"></div>
    <svg class="abs" style="left:11px;top:10.5px" width="12" height="10" viewBox="0 0 12 10"><path d="M.5 1.600C.5 1 1 .5 1.600.5h2.700l1.300 1.300H10.400c.6 0 1.100.5 1.100 1.100V8.400c0 .6-.5 1.100-1.100 1.100H1.600C1 9.500.5 9 .5 8.400z" fill="#e8b53a"/><path d="M.5 3.400C.5 2.800 1 2.300 1.600 2.300h8.800c.6 0 1.100.5 1.100 1.100v5c0 .6-.5 1.100-1.100 1.100H1.600C1 9.500.5 9 .5 8.400z" fill="#fcd667"/></svg>
    <div class="t" style="left:28.500px;top:10px;font-size:8.300px;letter-spacing:-0.289px">9.23</div>
    <svg class="abs" style="left:147px;top:12px" width="7" height="7" viewBox="0 0 7 7"><path d="M.6.600l5.800 5.800M6.400.6L.6 6.400" stroke="#333" stroke-width=".9"/></svg>
    <svg class="abs" style="left:176px;top:11px" width="8" height="8" viewBox="0 0 8 8"><path d="M4 .5v7M.5 4h7" stroke="#333" stroke-width=".9"/></svg>
    <div class="abs" style="left:669px;top:9px;width:8px;height:1px;background:#1a1a1a"></div>
    <div class="abs" style="left:699px;top:5.500px;width:7.500px;height:7.500px;border:1px solid #1a1a1a;border-radius:1px"></div>
    <svg class="abs" style="left:730px;top:5.500px" width="8" height="8" viewBox="0 0 8 8"><path d="M.5.500l7 7M7.500.5l-7 7" stroke="#1a1a1a" stroke-width="1"/></svg>
  </div>
  <div class="addr">
    <svg class="abs" style="left:13.500px;top:10.500px" width="9" height="8.100" viewBox="0 0 10 9"><path d="M9.500 4.500H.8M4.300.8L.7 4.500l3.600 3.700" fill="none" stroke="#2b2b2b" stroke-width="1" stroke-linecap="round" stroke-linejoin="round"/></svg>
    <svg class="abs" style="left:45.500px;top:10.500px" width="9" height="8.100" viewBox="0 0 10 9"><path d="M.5 4.500h8.700M5.700.8l3.600 3.700-3.600 3.700" fill="none" stroke="#c2c6ca" stroke-width="1" stroke-linecap="round" stroke-linejoin="round"/></svg>
    <svg class="abs" style="left:77.800px;top:10.500px" width="8.100" height="9" viewBox="0 0 9 10"><path d="M4.500 9.500V.8M.8 4.400L4.500.8l3.700 3.600" fill="none" stroke="#2b2b2b" stroke-width="1" stroke-linecap="round" stroke-linejoin="round"/></svg>
    <svg class="abs" style="left:109.500px;top:10.300px" width="9.200" height="9.200" viewBox="0 0 10 10"><path d="M8.600 5a3.700 3.700 0 1 1-1.400-2.900" fill="none" stroke="#2b2b2b" stroke-width="1" stroke-linecap="round"/><path d="M5.800 2.300h2.400V0" fill="none" stroke="#2b2b2b" stroke-width="1" stroke-linecap="round" stroke-linejoin="round" transform="translate(.3 .3)"/></svg>
    <div class="abs" style="left:131px;top:3px;width:427px;height:24px;background:#fbfcfd;border-radius:3px"></div>
    <div class="abs" style="left:566px;top:3px;width:175px;height:24px;background:#fbfcfd;border-radius:3px"></div>
    <svg class="abs" style="left:142.800px;top:9px" width="10.400" height="10.400" viewBox="0 0 11 11"><rect x=".7" y=".7" width="9.600" height="7.600" rx="1.800" fill="none" stroke="#3a3a3a" stroke-width="1"/><path d="M3.300 10h4.400" stroke="#3a3a3a" stroke-width="1" stroke-linecap="round"/></svg>
    <svg class="abs" style="left:165.500px;top:11.500px" width="5" height="7" viewBox="0 0 5 7"><path d="M1 .7l3 2.800-3 2.800" fill="none" stroke="#444" stroke-width=".9" stroke-linecap="round"/></svg>
    <svg class="abs" style="left:183px;top:14px" width="9" height="3" viewBox="0 0 9 3"><circle cx="1.200" cy="1.500" r=".75" fill="#333"/><circle cx="4.500" cy="1.500" r=".75" fill="#333"/><circle cx="7.800" cy="1.500" r=".75" fill="#333"/></svg>
    <div class="t a" style="left:203px;top:9px;letter-spacing:-0.001px">InterDepartmental</div>
    <svg class="abs" style="left:291px;top:11.500px" width="5" height="7" viewBox="0 0 5 7"><path d="M1 .7l3 2.800-3 2.800" fill="none" stroke="#444" stroke-width=".9" stroke-linecap="round"/></svg>
    <div class="t a" style="left:306.500px;top:9px;letter-spacing:-0.306px">CM_BOCC Presentations</div>
    <svg class="abs" style="left:417.500px;top:11.500px" width="5" height="7" viewBox="0 0 5 7"><path d="M1 .7l3 2.800-3 2.800" fill="none" stroke="#444" stroke-width=".9" stroke-linecap="round"/></svg>
    <div class="t a" style="left:434px;top:9px;letter-spacing:-0.340px">9.23</div>
    <div class="t a" style="left:578px;top:9px;color:#5c5c5c;letter-spacing:-0.304px">Search 9.23</div>
    <svg class="abs" style="left:724px;top:11px" width="9" height="9" viewBox="0 0 9 9"><circle cx="3.600" cy="3.600" r="2.700" fill="none" stroke="#555" stroke-width=".9"/><path d="M5.600 5.600l2.600 2.600" stroke="#555" stroke-width=".9" stroke-linecap="round"/></svg>
  </div>
  <div class="cmd">
    <svg class="abs" style="left:11.500px;top:10.500px" width="11" height="11" viewBox="0 0 11 11"><circle cx="5.500" cy="5.500" r="4.800" fill="none" stroke="#5f87b8" stroke-width=".9"/><path d="M5.500 3.300v4.400M3.300 5.500h4.400" stroke="#3f6fa8" stroke-width=".9" stroke-linecap="round"/></svg>
    <div class="t f" style="left:28px;top:10.500px;color:#1a1a1a;-webkit-text-stroke:.12px #1a1a1a;letter-spacing:-0.089px">New</div>
    <svg class="abs" style="left:48px;top:14.500px" width="5" height="3" viewBox="0 0 5 3"><path d="M.5.500l2 1.800 2-1.800" fill="none" stroke="#8a8a8a" stroke-width=".8"/></svg>
    <svg class="abs" style="left:75.500px;top:10.500px" width="11" height="12" viewBox="0 0 11 12"><path d="M2.600 1l4.600 7M8.400 1L3.800 8" stroke="#3a3a3a" stroke-width=".9" stroke-linecap="round"/><circle cx="2.700" cy="9.300" r="1.700" fill="none" stroke="#2f7fd4" stroke-width=".9"/><circle cx="8.300" cy="9.300" r="1.700" fill="none" stroke="#2f7fd4" stroke-width=".9"/></svg>
    <svg class="abs" style="left:107.500px;top:11px" width="11" height="11" viewBox="0 0 11 11"><rect x="3.800" y=".7" width="6.200" height="7" rx="1.200" fill="#fff" stroke="#3a96e0" stroke-width=".9"/><path d="M2.600 3H2c-.7 0-1.200.5-1.200 1.200v4.600c0 .7.500 1.200 1.200 1.200h3.600c.7 0 1.200-.5 1.200-1.200" fill="none" stroke="#555" stroke-width=".9"/></svg>
    <svg class="abs" style="left:139.500px;top:10.500px" width="11" height="12" viewBox="0 0 11 12"><rect x=".8" y="1.800" width="8.400" height="9.400" rx="1.200" fill="none" stroke="#d2d5d9" stroke-width=".9"/><rect x="4.600" y="5" width="5.600" height="6.200" rx="1" fill="#fff" stroke="#d2d5d9" stroke-width=".9"/><rect x="3" y=".6" width="4" height="2" rx=".8" fill="#fff" stroke="#d2d5d9" stroke-width=".8"/></svg>
    <svg class="abs" style="left:171px;top:10.500px" width="13" height="12" viewBox="0 0 13 12"><rect x=".8" y="2" width="9.800" height="8" rx="1.500" fill="none" stroke="#3a8ad6" stroke-width=".9"/><path d="M8.600 .6v10.800M7.500.6h2.300M7.500 11.400h2.300" stroke="#555" stroke-width=".8"/><text x="4.600" y="8.200" text-anchor="middle" font-size="5.500" fill="#444" font-family="Liberation Sans, sans-serif">A</text></svg>
    <svg class="abs" style="left:203.500px;top:10.500px" width="12" height="12" viewBox="0 0 12 12"><path d="M4.500 2.200H2.400c-.8 0-1.400.6-1.400 1.400v5.800c0 .8.600 1.400 1.400 1.400h5.800c.8 0 1.400-.6 1.400-1.400V8.600" fill="none" stroke="#555" stroke-width=".9" stroke-linecap="round"/><path d="M7.200 1.200l3.600 3.200-3.600 3.200V5.800C5.400 5.700 4.200 6.300 3.400 7.700c.2-2.500 1.500-4.100 3.800-4.500z" fill="none" stroke="#2f7fd4" stroke-width=".9" stroke-linejoin="round"/></svg>
    <svg class="abs" style="left:236px;top:10.500px" width="11" height="12" viewBox="0 0 11 12"><path d="M.8 2.600h9.400M3.800 2.400c0-2.200 3.400-2.200 3.400 0M1.900 2.800l.7 7.500c.1.600.5 1 1.100 1h3.600c.6 0 1-.4 1.100-1l.7-7.500M4.400 5v4M6.600 5v4" fill="none" stroke="#555" stroke-width=".9" stroke-linecap="round"/></svg>
    <svg class="abs" style="left:270px;top:10.500px" width="12" height="11" viewBox="0 0 12 11"><path d="M3 10V1.200M.8 3.300L3 1l2.200 2.300" fill="none" stroke="#555" stroke-width=".9" stroke-linecap="round" stroke-linejoin="round"/><path d="M8.400 1v8.800M6.200 7.700L8.400 10l2.200-2.300" fill="none" stroke="#2f7fd4" stroke-width=".9" stroke-linecap="round" stroke-linejoin="round"/></svg>
    <div class="t f" style="left:286px;top:10.500px;color:#1a1a1a;letter-spacing:-0.043px">Sort</div>
    <svg class="abs" style="left:305px;top:14.500px" width="5" height="3" viewBox="0 0 5 3"><path d="M.5.500l2 1.800 2-1.800" fill="none" stroke="#8a8a8a" stroke-width=".8"/></svg>
    <svg class="abs" style="left:327.500px;top:12px" width="11" height="8" viewBox="0 0 11 8"><path d="M.5 1h10M.5 4h10M.5 7h10" stroke="#333" stroke-width=".9"/></svg>
    <div class="t f" style="left:344.500px;top:10.500px;color:#1a1a1a;letter-spacing:-0.051px">View</div>
    <svg class="abs" style="left:365px;top:14.500px" width="5" height="3" viewBox="0 0 5 3"><path d="M.5.500l2 1.800 2-1.800" fill="none" stroke="#8a8a8a" stroke-width=".8"/></svg>
    <svg class="abs" style="left:392px;top:14.500px" width="12" height="3" viewBox="0 0 12 3"><circle cx="1.400" cy="1.500" r=".9" fill="#222"/><circle cx="6" cy="1.500" r=".9" fill="#222"/><circle cx="10.600" cy="1.500" r=".9" fill="#222"/></svg>
    <svg class="abs" style="left:693.500px;top:11.500px" width="12" height="10" viewBox="0 0 12 10"><rect x=".7" y=".7" width="10.600" height="8.200" rx="1.600" fill="none" stroke="#555" stroke-width=".9"/><path d="M7.400.8v8" stroke="#555" stroke-width=".8"/><rect x="7.800" y="1.200" width="3.100" height="7.200" rx="1" fill="#8cc4f2"/></svg>
    <div class="t f" style="left:710.500px;top:10.500px;color:#1a1a1a;letter-spacing:-0.150px">Details</div>
  </div>
  <!-- nav pane -->
  <div class="abs" style="left:91px;top:90px;width:14px;height:306px;background:linear-gradient(90deg,#fff,#f3f3f3 45%,#f3f3f3 60%,#fff)"></div>
  <div class="abs" style="left:98px;top:170px;width:1.500px;height:224px;background:#8c8c8c;border-radius:1px"></div>
  <svg class="abs" style="left:23px;top:94.7px" width="10" height="11" viewBox="0 0 10 11"><path d="M5 .5v6.500M2.200 4.600L5 7.400l2.800-2.800" fill="none" stroke="#19a974" stroke-width="1.300" stroke-linecap="round" stroke-linejoin="round"/><path d="M1 9.800h8" stroke="#19a974" stroke-width="1.300" stroke-linecap="round"/></svg><div class="t f" style="left:36.500px;top:94.7px;letter-spacing:-0.031px">Downloads</div><svg class="abs" style="left:84px;top:96.7px" width="7" height="7" viewBox="0 0 7 7"><path d="M4 .4l2.600 2.600-.8.300-1.200 1.200-.2 1.500-.7.600L2 4.900.4 6.600l.1-.5L1.900 4.600.3 3l.6-.6 1.500-.2 1.200-1.200z" fill="#999"/></svg>
<svg class="abs" style="left:23px;top:116.1px" width="10" height="11" viewBox="0 0 10 11"><rect x="1" y=".5" width="8" height="10" rx="1.200" fill="#9db4c8"/><rect x="2.200" y="1.800" width="5.600" height="4" fill="#dfe9f2"/><path d="M2.200 7.300h5.600M2.200 8.800h5.600" stroke="#e9f0f6" stroke-width=".8"/><rect x="1" y="8.600" width="8" height="1.900" rx=".8" fill="#6f93b5"/></svg><div class="t f" style="left:36.500px;top:116.1px;letter-spacing:0.003px">Documents</div><svg class="abs" style="left:84px;top:118.1px" width="7" height="7" viewBox="0 0 7 7"><path d="M4 .4l2.600 2.600-.8.300-1.200 1.200-.2 1.500-.7.600L2 4.900.4 6.600l.1-.5L1.900 4.600.3 3l.6-.6 1.500-.2 1.200-1.200z" fill="#999"/></svg>
<svg class="abs" style="left:23px;top:137.5px" width="10" height="10" viewBox="0 0 10 10"><rect x=".5" y=".5" width="9" height="9" rx="1.200" fill="#1f86dc"/><path d="M.8 9.200l3-3.600c.4-.5 1-.5 1.400 0l3.800 3.700z" fill="#e6f2fc"/><circle cx="7" cy="3" r="1" fill="#e6f2fc"/></svg><div class="t f" style="left:36.500px;top:137.5px;letter-spacing:-0.176px">Pictures</div><svg class="abs" style="left:84px;top:139.5px" width="7" height="7" viewBox="0 0 7 7"><path d="M4 .4l2.600 2.600-.8.300-1.200 1.200-.2 1.500-.7.600L2 4.900.4 6.600l.1-.5L1.900 4.600.3 3l.6-.6 1.500-.2 1.200-1.200z" fill="#999"/></svg>
<svg class="abs" style="left:22.500px;top:158.7px" width="11" height="11" viewBox="0 0 11 11"><circle cx="5.500" cy="5.500" r="5" fill="#e0605a"/><circle cx="5.500" cy="5.500" r="5" fill="none" stroke="#ee8a7c" stroke-width=".8"/><path d="M5 7.600V3.200l2.400-.7v1.300L5.900 4.200" fill="none" stroke="#fff" stroke-width=".9"/><circle cx="4.300" cy="7.600" r="1.100" fill="#fff"/></svg><div class="t f" style="left:36.500px;top:158.7px;letter-spacing:0.022px">Music</div><svg class="abs" style="left:84px;top:160.7px" width="7" height="7" viewBox="0 0 7 7"><path d="M4 .4l2.600 2.600-.8.300-1.200 1.200-.2 1.500-.7.600L2 4.900.4 6.600l.1-.5L1.900 4.600.3 3l.6-.6 1.500-.2 1.200-1.200z" fill="#999"/></svg>
<svg class="abs" style="left:23px;top:180.0px" width="10" height="10" viewBox="0 0 10 10"><rect x=".5" y=".5" width="9" height="9" rx="1.200" fill="#7a2fe0"/><path d="M1.600.5v9M8.400.5v9" stroke="#b68cf2" stroke-width=".9" stroke-dasharray="1.200 1"/><path d="M3.800 3l3 2-3 2z" fill="#fff"/></svg><div class="t f" style="left:36.500px;top:180.0px;letter-spacing:-0.171px">Videos</div><svg class="abs" style="left:84px;top:182.0px" width="7" height="7" viewBox="0 0 7 7"><path d="M4 .4l2.600 2.600-.8.300-1.200 1.200-.2 1.500-.7.600L2 4.900.4 6.600l.1-.5L1.900 4.600.3 3l.6-.6 1.500-.2 1.200-1.200z" fill="#999"/></svg>
<svg class="abs" style="left:23px;top:201.8px" width="11" height="9.5" viewBox="0 0 12 10"><path d="M.5 1.600C.5 1 1 .5 1.600.5h2.700l1.300 1.300H10.400c.6 0 1.100.5 1.100 1.100V8.400c0 .6-.5 1.100-1.100 1.100H1.600C1 9.500.5 9 .5 8.400z" fill="#e8b53a"/><path d="M.5 3.400C.5 2.800 1 2.300 1.600 2.300h8.800c.6 0 1.100.5 1.100 1.100v5c0 .6-.5 1.100-1.100 1.100H1.600C1 9.500.5 9 .5 8.400z" fill="#fcd667"/></svg><div class="t f" style="left:36.500px;top:201.3px;letter-spacing:-0.457px">9.10</div>
<svg class="abs" style="left:23px;top:223px" width="11" height="9.5" viewBox="0 0 12 10"><path d="M.5 1.600C.5 1 1 .5 1.600.5h2.700l1.300 1.300H10.400c.6 0 1.100.5 1.100 1.100V8.400c0 .6-.5 1.100-1.100 1.100H1.600C1 9.500.5 9 .5 8.400z" fill="#e8b53a"/><path d="M.5 3.400C.5 2.800 1 2.300 1.600 2.300h8.800c.6 0 1.100.5 1.100 1.100v5c0 .6-.5 1.100-1.100 1.100H1.600C1 9.500.5 9 .5 8.400z" fill="#fcd667"/></svg><div class="t f" style="left:36.500px;top:222.5px;letter-spacing:-0.510px">CM_BOCC Prese</div>
<svg class="abs" style="left:23px;top:244.4px" width="11" height="9.5" viewBox="0 0 12 10"><path d="M.5 1.600C.5 1 1 .5 1.600.5h2.700l1.300 1.300H10.400c.6 0 1.100.5 1.100 1.100V8.400c0 .6-.5 1.100-1.100 1.100H1.600C1 9.500.5 9 .5 8.400z" fill="#e8b53a"/><path d="M.5 3.400C.5 2.800 1 2.300 1.600 2.300h8.800c.6 0 1.100.5 1.100 1.100v5c0 .6-.5 1.100-1.100 1.100H1.600C1 9.500.5 9 .5 8.400z" fill="#fcd667"/></svg><div class="t f" style="left:36.500px;top:243.9px;letter-spacing:-0.457px">2.10</div>
<svg class="abs" style="left:23px;top:265.8px" width="11" height="9.5" viewBox="0 0 12 10"><path d="M.5 1.600C.5 1 1 .5 1.600.5h2.700l1.300 1.300H10.400c.6 0 1.100.5 1.100 1.100V8.400c0 .6-.5 1.100-1.100 1.100H1.600C1 9.500.5 9 .5 8.400z" fill="#e8b53a"/><path d="M.5 3.400C.5 2.800 1 2.300 1.600 2.300h8.800c.6 0 1.100.5 1.100 1.100v5c0 .6-.5 1.100-1.100 1.100H1.600C1 9.500.5 9 .5 8.400z" fill="#fcd667"/></svg><div class="t f" style="left:36.500px;top:265.3px;letter-spacing:-0.457px">7.29</div>

  <div class="abs" style="left:8px;top:292.500px;width:84px;height:1px;background:#e6e6e6"></div>
  <div class="abs" style="left:2px;top:324px;width:90px;height:21.500px;background:#d9d9d9;border-radius:2px"></div>
  <svg class="abs" style="left:8px;top:310px" width="5" height="7" viewBox="0 0 5 7"><path d="M1 .7l2.800 2.800L1 6.300" fill="none" stroke="#666" stroke-width=".8"/></svg>
  <svg class="abs" style="left:8px;top:331.500px" width="5" height="7" viewBox="0 0 5 7"><path d="M1 .7l2.800 2.800L1 6.300" fill="none" stroke="#666" stroke-width=".8"/></svg>
  <svg class="abs" style="left:8px;top:353px" width="5" height="7" viewBox="0 0 5 7"><path d="M1 .7l2.800 2.800L1 6.300" fill="none" stroke="#666" stroke-width=".8"/></svg>
  <svg class="abs" style="left:22px;top:309.500px" width="12" height="8" viewBox="0 0 12 8"><path d="M3 7.500a2.500 2.500 0 0 1-.3-5A3.200 3.200 0 0 1 8.600 2a2.800 2.800 0 0 1 .6 5.500z" fill="#1f7fd8"/><path d="M3 7.500a2.500 2.500 0 0 1-.3-5c1.800 0 3 1.600 5 3.200l1.800 1.700z" fill="#1464c0"/></svg>
  <div class="t f" style="left:36.500px;top:307.500px;letter-spacing:-0.162px">OneDrive</div>
  <svg class="abs" style="left:22.500px;top:329.500px" width="12" height="10" viewBox="0 0 12 10"><rect x=".5" y=".5" width="11" height="7.500" rx=".8" fill="#2fb7d6"/><rect x="1.300" y="1.300" width="9.400" height="5.900" fill="#55d0e6"/><path d="M3.500 9.300h5" stroke="#5a7f92" stroke-width="1"/></svg>
  <div class="t f" style="left:36.500px;top:329px;letter-spacing:-0.350px">This PC</div>
  <svg class="abs" style="left:22.500px;top:350.500px" width="12" height="11" viewBox="0 0 12 11"><rect x="2.500" y="2.500" width="9" height="6.300" rx=".7" fill="#2f9fd0"/><rect x="3.200" y="3.200" width="7.600" height="4.900" fill="#5cc7e4"/><rect x=".5" y=".5" width="4.500" height="3.600" fill="#3b82c4" stroke="#e8f2fa" stroke-width=".5"/><path d="M5 10.300h4" stroke="#5a7f92" stroke-width="1"/></svg>
  <div class="t f" style="left:36.500px;top:350.500px;letter-spacing:0.022px">Network</div>
  <!-- header -->
  <svg class="abs" style="left:201px;top:89.500px" width="7" height="4" viewBox="0 0 7 4"><path d="M.7 3.300L3.500.7l2.800 2.600" fill="none" stroke="#666" stroke-width=".8"/></svg>
  <div class="t f" style="left:127px;top:92.500px;color:#5a6572;letter-spacing:-0.148px">Name</div>
  <div class="t f" style="left:292px;top:92.500px;color:#5a6572;letter-spacing:0.049px">Date modified</div>
  <div class="t f" style="left:388px;top:92.500px;color:#5a6572;letter-spacing:-0.273px">Type</div>
  <div class="t f" style="left:467.500px;top:92.500px;color:#5a6572;letter-spacing:-0.641px">Size</div>
  <div class="abs" style="left:284px;top:90px;width:1px;height:18px;background:#f1f1f1"></div>
  <div class="abs" style="left:380px;top:90px;width:1px;height:18px;background:#f1f1f1"></div>
  <div class="abs" style="left:460px;top:90px;width:1px;height:18px;background:#f1f1f1"></div>
  <div class="abs" style="left:517px;top:90px;width:1px;height:18px;background:#f1f1f1"></div>
  <svg class="abs" style="left:118px;top:112.5px" width="12" height="12" viewBox="0 0 12 12"><path d="M2 .5h5.500L10 3v8.500H2z" fill="#fbfbfb" stroke="#d9d9d9" stroke-width=".5"/><rect x=".3" y="3.600" width="11.400" height="6.600" rx="1.300" fill="#d6122c"/><text x="6" y="8.600" text-anchor="middle" font-size="4.600" font-weight="700" fill="#fff" font-family="Liberation Sans, sans-serif" letter-spacing="-.2">PDF</text></svg><div class="t f" style="left:132px;top:113.3px;color:#1a1a1a;letter-spacing:-0.106px">2026 LIG - Priorities &amp; Principles</div><div class="t f" style="left:292px;top:113.3px;color:#6b6b6b;letter-spacing:-0.132px">9/12/2025 10:08 AM</div><div class="t f" style="left:388px;top:113.3px;color:#6b6b6b;letter-spacing:-0.016px">Microsoft Edge P...</div><div class="t f" style="left:440px;width:72.500px;text-align:right;top:113.3px;color:#6b6b6b;letter-spacing:-0.542px">238 KB</div>
<svg class="abs" style="left:118px;top:131.2px" width="12" height="12" viewBox="0 0 12 12"><path d="M2 .5h5.500L10 3v8.500H2z" fill="#fbfbfb" stroke="#d9d9d9" stroke-width=".5"/><rect x=".3" y="3.600" width="11.400" height="6.600" rx="1.300" fill="#d6122c"/><text x="6" y="8.600" text-anchor="middle" font-size="4.600" font-weight="700" fill="#fff" font-family="Liberation Sans, sans-serif" letter-spacing="-.2">PDF</text></svg><div class="t f" style="left:132px;top:132.0px;color:#1a1a1a;letter-spacing:-0.083px">Arapahoe County Federal Update with B...</div><div class="t f" style="left:292px;top:132.0px;color:#6b6b6b;letter-spacing:-0.183px">9/22/2025 2:19 PM</div><div class="t f" style="left:388px;top:132.0px;color:#6b6b6b;letter-spacing:-0.016px">Microsoft Edge P...</div><div class="t f" style="left:440px;width:72.500px;text-align:right;top:132.0px;color:#6b6b6b;letter-spacing:-0.542px">493 KB</div>
<svg class="abs" style="left:118px;top:149.5px" width="12" height="13" viewBox="0 0 12 13"><path d="M2.200 .6h5.600L10.600 3.400v8.800H2.200z" fill="#fdfdfd" stroke="#c9c4c2" stroke-width=".6"/><path d="M7.800 .6v2.800h2.800" fill="none" stroke="#c9c4c2" stroke-width=".6"/><circle cx="4.300" cy="7" r="3.300" fill="#d24726"/><path d="M6.500 6.200h3M6.500 8h3" stroke="#e9967f" stroke-width=".8"/><text x="4.300" y="8.700" text-anchor="middle" font-size="4.800" font-weight="700" fill="#fff" font-family="Liberation Sans, sans-serif">P</text></svg><div class="t f" style="left:132px;top:150.5px;color:#1a1a1a;letter-spacing:-0.371px">Byers_SAP-BOCC Study Session_9.23.2025</div><div class="t f" style="left:292px;top:150.5px;color:#6b6b6b;letter-spacing:-0.098px">9/23/2025 8:10 AM</div><div class="t f" style="left:388px;top:150.5px;color:#6b6b6b;letter-spacing:-0.004px">Microsoft PowerP...</div><div class="t f" style="left:440px;width:72.500px;text-align:right;top:150.5px;color:#6b6b6b;letter-spacing:-0.403px">27,160 KB</div>
<div class="abs" style="left:116px;top:166.0px;width:399px;height:17px;background:#cce8f6;border:1px solid #3b4045"></div>
<svg class="abs" style="left:118px;top:168.3px" width="12" height="12" viewBox="0 0 12 12"><path d="M2 .5h5.500L10 3v8.500H2z" fill="#fbfbfb" stroke="#d9d9d9" stroke-width=".5"/><rect x=".3" y="3.600" width="11.400" height="6.600" rx="1.300" fill="#d6122c"/><text x="6" y="8.600" text-anchor="middle" font-size="4.600" font-weight="700" fill="#fff" font-family="Liberation Sans, sans-serif" letter-spacing="-.2">PDF</text></svg><div class="t f" style="left:132px;top:169.1px;color:#1a1a1a;letter-spacing:-0.538px">PPT_Byers_250923</div><div class="t f" style="left:292px;top:169.1px;color:#1a1a1a;letter-spacing:-0.153px">9/17/2025 1:54 PM</div><div class="t f" style="left:388px;top:169.1px;color:#1a1a1a;letter-spacing:-0.016px">Microsoft Edge P...</div><div class="t f" style="left:440px;width:72.500px;text-align:right;top:169.1px;color:#1a1a1a;letter-spacing:-0.428px">3,947 KB</div>
<svg class="abs" style="left:118px;top:187.0px" width="12" height="12" viewBox="0 0 12 12"><path d="M2 .5h5.500L10 3v8.500H2z" fill="#fbfbfb" stroke="#d9d9d9" stroke-width=".5"/><rect x=".3" y="3.600" width="11.400" height="6.600" rx="1.300" fill="#d6122c"/><text x="6" y="8.600" text-anchor="middle" font-size="4.600" font-weight="700" fill="#fff" font-family="Liberation Sans, sans-serif" letter-spacing="-.2">PDF</text></svg><div class="t f" style="left:132px;top:187.8px;color:#1a1a1a;letter-spacing:-0.344px">PPT_LDC_Group_Housing_250923</div><div class="t f" style="left:292px;top:187.8px;color:#6b6b6b;letter-spacing:-0.098px">9/19/2025 8:30 AM</div><div class="t f" style="left:388px;top:187.8px;color:#6b6b6b;letter-spacing:-0.016px">Microsoft Edge P...</div><div class="t f" style="left:440px;width:72.500px;text-align:right;top:187.8px;color:#6b6b6b;letter-spacing:-0.542px">133 KB</div>
<svg class="abs" style="left:118px;top:205.5px" width="12" height="13" viewBox="0 0 12 13"><path d="M2.200 .6h5.600L10.600 3.400v8.800H2.200z" fill="#fdfdfd" stroke="#c9c4c2" stroke-width=".6"/><path d="M7.800 .6v2.800h2.800" fill="none" stroke="#c9c4c2" stroke-width=".6"/><circle cx="4.300" cy="7" r="3.300" fill="#d24726"/><path d="M6.500 6.200h3M6.500 8h3" stroke="#e9967f" stroke-width=".8"/><text x="4.300" y="8.700" text-anchor="middle" font-size="4.800" font-weight="700" fill="#fff" font-family="Liberation Sans, sans-serif">P</text></svg><div class="t f" style="left:132px;top:206.5px;color:#1a1a1a;letter-spacing:-0.344px">PPT_LDC_Group_Housing_250923</div><div class="t f" style="left:292px;top:206.5px;color:#6b6b6b;letter-spacing:-0.098px">9/19/2025 8:29 AM</div><div class="t f" style="left:388px;top:206.5px;color:#6b6b6b;letter-spacing:-0.004px">Microsoft PowerP...</div><div class="t f" style="left:440px;width:72.500px;text-align:right;top:206.5px;color:#6b6b6b;letter-spacing:-0.625px">128 KB</div>

  <!-- cursor -->
  <svg class="abs" style="left:186.500px;top:170.500px" width="10" height="14" viewBox="0 0 10 14"><path d="M.7.800v10.400l2.500-2.300 1.700 4 1.600-.7-1.700-3.900h3.500z" fill="#fff" stroke="#222" stroke-width=".8" stroke-linejoin="round"/></svg>
  <!-- status -->
  <div class="t f" style="left:9px;top:407.500px;color:#3d3d3d;letter-spacing:-0.114px">6 items</div>
  <div class="t f" style="left:49px;top:407.500px;color:#3d3d3d;letter-spacing:-0.169px">1 item selected&nbsp;&nbsp;3.85 MB</div>
  <div class="abs" style="left:714px;top:405px;width:16px;height:16px;border:1px solid #58a6d8;background:#eaf4fb"></div>
  <svg class="abs" style="left:718px;top:409px" width="8" height="8" viewBox="0 0 8 8"><path d="M0 .8h8M0 2.900h8M0 5h8M0 7.100h8" stroke="#444" stroke-width=".8"/></svg>
  <svg class="abs" style="left:734px;top:409px" width="9" height="9" viewBox="0 0 9 9"><rect x=".6" y=".6" width="7.800" height="7" fill="#fff" stroke="#555" stroke-width=".9"/><path d="M.6 6.800h7.800" stroke="#555" stroke-width="1.400"/></svg>
</div>

<div id="task">
  <!-- start -->
  <svg class="abs" style="left:469.500px;top:7.500px" width="16" height="16" viewBox="0 0 16 16"><defs><linearGradient id="wg" x1="0" y1="0" x2="1" y2="1"><stop offset="0" stop-color="#4cc2f0"/><stop offset="1" stop-color="#1279d6"/></linearGradient></defs><rect x="0" y="0" width="7.600" height="7.600" rx=".6" fill="url(#wg)"/><rect x="8.400" y="0" width="7.600" height="7.600" rx=".6" fill="url(#wg)"/><rect x="0" y="8.400" width="7.600" height="7.600" rx=".6" fill="url(#wg)"/><rect x="8.400" y="8.400" width="7.600" height="7.600" rx=".6" fill="url(#wg)"/></svg>
  <!-- search -->
  <div class="abs" style="left:494px;top:6px;width:145px;height:20px;border-radius:10px;background:#f4f8fc;box-shadow:0 0 0 .5px #d8e2ee"></div>
  <svg class="abs" style="left:501px;top:11px" width="11" height="11" viewBox="0 0 11 11"><circle cx="4.600" cy="4.600" r="3.600" fill="none" stroke="#2a2a2a" stroke-width="1.300"/><path d="M7.300 7.300l3 3" stroke="#2a2a2a" stroke-width="1.400" stroke-linecap="round"/></svg>
  <div class="t" style="left:518.500px;top:10px;font-size:9.300px;line-height:12px;color:#5f6368;letter-spacing:-0.411px">Search</div>
  <!-- task view -->
  <svg class="abs" style="left:648px;top:8.500px" width="16" height="15" viewBox="0 0 16 15"><rect x="4.500" y=".5" width="11" height="10" rx="1" fill="#e9edf2" stroke="#c5ccd4" stroke-width=".6"/><rect x=".6" y="3.600" width="11.400" height="10.800" rx="1.200" fill="#1d1d1f"/><rect x="4.600" y="3.600" width="7.400" height="6.600" fill="#c9ced4"/></svg>
  <!-- explorer -->
  <div class="abs" style="left:672.500px;top:2px;width:26px;height:28px;border-radius:3px;background:#f1f6fb;box-shadow:0 0 0 .5px #e0e8f0"></div>
  <svg class="abs" style="left:677px;top:8px" width="18" height="16" viewBox="0 0 18 16"><path d="M.8 2.400C.8 1.500 1.500.8 2.400.8h4l1.700 1.600h7.500c.9 0 1.600.7 1.600 1.600v2H.8z" fill="#e9a825"/><rect x=".8" y="3.600" width="16.400" height="11.400" rx="1.400" fill="#fbd050"/><path d="M.8 10h16.400v3.600c0 .8-.6 1.400-1.400 1.400H2.200c-.8 0-1.400-.6-1.400-1.400z" fill="#f5c033"/><rect x="3.400" y="9.300" width="11.200" height="4" rx=".8" fill="#2f86d2"/><rect x="5" y="11.800" width="8" height="3.200" fill="#1c6dbb"/></svg>
  <div class="abs" style="left:680.500px;top:26.500px;width:10.500px;height:2px;border-radius:1px;background:#3f7fd0"></div>
  <!-- edge -->
  <svg class="abs" style="left:707px;top:8.500px" width="17" height="16" viewBox="0 0 17 16"><defs><linearGradient id="eg1" x1="0" y1="0" x2="1" y2="1"><stop offset="0" stop-color="#35c1a0"/><stop offset=".6" stop-color="#2ea3d8"/><stop offset="1" stop-color="#1a62c4"/></linearGradient></defs><circle cx="8.500" cy="8" r="7.500" fill="url(#eg1)"/><path d="M1.200 9.800C1.400 5.500 5 3.400 8.600 3.400c3.800 0 6.500 2.500 6.500 5 0 1.800-1.400 2.900-3 2.900-1.500 0-2-.7-2-1.300 0-.5.400-.8.400-1.500 0-1-1-1.800-2.300-1.800-2.200 0-3.600 1.900-3.600 4 0 2.600 2 4.400 4 4.700-3.800.6-7.500-1.800-7.400-5.600z" fill="#1557b8" opacity=".85"/><rect x=".5" y="9.300" width="8" height="5.400" rx=".8" fill="#b7772a"/><rect x=".5" y="9.300" width="8" height="2" rx=".6" fill="#d89a40"/></svg>
  <!-- store -->
  <svg class="abs" style="left:736px;top:8px" width="16" height="16" viewBox="0 0 16 16"><path d="M5 3.600V2.400C5 1.400 5.800.6 6.800.6h2.400c1 0 1.800.8 1.800 1.800v1.200" fill="none" stroke="#2c9bd8" stroke-width="1.200"/><rect x=".6" y="3.400" width="14.800" height="12" rx="1.600" fill="#155f9e"/><rect x="4.600" y="6" width="3" height="3" fill="#f25022"/><rect x="8.400" y="6" width="3" height="3" fill="#7fba00"/><rect x="4.600" y="9.800" width="3" height="3" fill="#00a4ef"/><rect x="8.400" y="9.800" width="3" height="3" fill="#ffb900"/></svg>
  <!-- teams -->
  <svg class="abs" style="left:764px;top:3px" width="22" height="22" viewBox="0 0 22 22"><circle cx="11.500" cy="10.600" r="2.700" fill="#5b63c9"/><circle cx="15.400" cy="11.400" r="1.800" fill="#7b83eb"/><path d="M8.500 13.600h6.800v5a3.400 3.400 0 0 1-6.800.4z" fill="#5b63c9"/><path d="M14 14h4v3.600a2.200 2.200 0 0 1-4 .8z" fill="#7b83eb"/><rect x="1" y="10.400" width="9.400" height="9.400" rx="1.200" fill="#4b53bc"/><path d="M3.500 12.800h4.400v1.200H6.300v4H5.100v-4H3.500z" fill="#fff"/><circle cx="16" cy="6.700" r="5" fill="#d42a3a"/><text x="15.800" y="8.900" text-anchor="middle" font-size="6" font-weight="700" fill="#fff" font-family="Liberation Sans, sans-serif">9+</text></svg>
  <div class="abs" style="left:771.500px;top:27px;width:4px;height:1.500px;border-radius:1px;background:#8a9099"></div>
  <!-- powerpoint -->
  <svg class="abs" style="left:794px;top:8px" width="18" height="16" viewBox="0 0 18 16"><circle cx="10.500" cy="8" r="7" fill="#e0563c"/><path d="M10.500 1a7 7 0 0 1 7 7h-7z" fill="#f08a6e"/><path d="M10.500 8h7a7 7 0 0 1-7 7z" fill="#c43e1c" opacity=".7"/><rect x=".8" y="3.400" width="9.200" height="9.200" rx="1.200" fill="#c43e1c"/><text x="5.400" y="10.700" text-anchor="middle" font-size="7.500" font-weight="700" fill="#fff" font-family="Liberation Sans, sans-serif">P</text></svg>
  <div class="abs" style="left:801.500px;top:27px;width:4px;height:1.500px;border-radius:1px;background:#8a9099"></div>
  <!-- tray -->
  <svg class="abs" style="left:1129.500px;top:13.500px" width="8" height="5" viewBox="0 0 8 5"><path d="M.7 4.300L4 1l3.300 3.300" fill="none" stroke="#2a2a2a" stroke-width="1.100" stroke-linecap="round" stroke-linejoin="round"/></svg>
  <svg class="abs" style="left:1149px;top:11px" width="13" height="10" viewBox="0 0 13 10"><path d="M3.400 8.600a2.600 2.600 0 0 1-.3-5.200A3.600 3.600 0 0 1 9.800 3a2.800 2.800 0 0 1 .3 5.600z" fill="none" stroke="#222" stroke-width="1.100" stroke-linejoin="round"/><path d="M1.500 1l9.500 8.200" stroke="#222" stroke-width="1.100" stroke-linecap="round"/></svg>
  <div class="abs" style="left:1166px;top:2.500px;width:21px;height:26px;border-radius:3px;background:#1568c0"></div>
  <svg class="abs" style="left:1171.500px;top:9.500px" width="10" height="13" viewBox="0 0 10 13"><rect x="3.200" y=".5" width="3.600" height="7" rx="1.800" fill="#fff"/><path d="M1.400 5.800a3.600 3.600 0 0 0 7.200 0M5 9.500v2.600" fill="none" stroke="#dfeaf6" stroke-width="1" stroke-linecap="round"/></svg>
  <svg class="abs" style="left:1191.500px;top:9.500px" width="13" height="13" viewBox="0 0 13 13"><rect x=".7" y="1.700" width="9" height="7.300" rx=".8" fill="none" stroke="#2a2a2a" stroke-width="1.100"/><path d="M3.300 11.200h5M5.800 9v2.200" stroke="#2a2a2a" stroke-width="1.100"/><rect x="8.600" y=".6" width="3.400" height="5" rx="1" fill="#e9f0f7" stroke="#2a2a2a" stroke-width=".9"/><path d="M10.300 5.600v5.600H8.400" fill="none" stroke="#2a2a2a" stroke-width=".9"/></svg>
  <svg class="abs" style="left:1207.500px;top:11px" width="13" height="10" viewBox="0 0 13 10"><path d="M.7 3.400h1.900L5.200.9v8.200L2.600 6.600H.7z" fill="none" stroke="#2a2a2a" stroke-width="1" stroke-linejoin="round"/><path d="M7 3.200c.9.900.9 2.700 0 3.600M8.800 1.800c1.600 1.700 1.600 4.700 0 6.400M10.600.6c2.200 2.300 2.200 6.500 0 8.800" fill="none" stroke="#2a2a2a" stroke-width=".9" stroke-linecap="round"/></svg>
  <div class="t" style="right:13px;top:5.500px;font-size:8px;line-height:10px;color:#1f1f1f;letter-spacing:-0.114px">1:29 PM</div>
  <div class="t" style="right:13px;top:16px;font-size:8px;line-height:10px;color:#1f1f1f;letter-spacing:0.156px">9/23/2025</div>
</div>
</body></html>
